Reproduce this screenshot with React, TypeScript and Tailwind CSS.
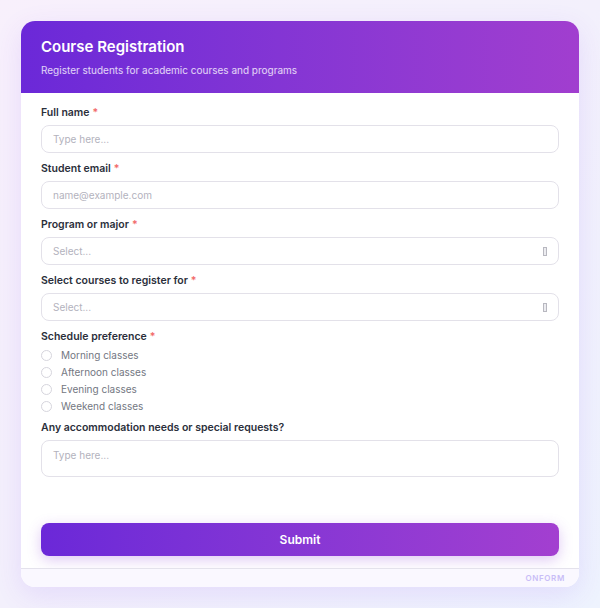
import React from "react";

function Label({ text, required = true }: { text: string; required?: boolean }) {
  return (
    <div className="h-4 text-[10.5px] leading-4 font-semibold text-[#2b2f3b]">
      {text}
      {required && <span className="ml-[3px] text-[#f26b6b]">*</span>}
    </div>
  );
}

function Input({ placeholder }: { placeholder: string }) {
  return (
    <div className="mt-1 flex h-[28px] items-center rounded-lg border-[1.5px] border-[#e3e1e9] bg-white pl-[11px] pr-3 text-[10px] text-[#b3b2bd]">
      {placeholder}
    </div>
  );
}

function Select() {
  return (
    <div className="mt-1 flex h-[28px] items-center justify-between rounded-lg border-[1.5px] border-[#e3e1e9] bg-white pl-[11px] pr-[11px] text-[10px] text-[#b3b2bd]">
      <span>Select...</span>
      <span className="block h-[9px] w-[4px] border border-[#b8b8c0] bg-[#ececf0]" />
    </div>
  );
}

function Radio({ text }: { text: string }) {
  return (
    <div className="flex h-[17px] items-center">
      <span className="block h-[11px] w-[11px] rounded-full border border-[#d6d5dd] bg-white" />
      <span className="ml-[9px] text-[10px] text-[#737782]">{text}</span>
    </div>
  );
}

export default function App() {
  return (
    <div
      className="min-h-[608px] w-full bg-gradient-to-br from-[#f8f0fc] via-[#f3f0fc] to-[#eef3fe] p-[21px]"
      style={{ fontFamily: "Inter, 'Noto Sans', sans-serif" }}
    >
      <div className="flex h-[566px] flex-col overflow-hidden rounded-[14px] bg-white shadow-[0_8px_28px_rgba(124,58,237,0.12)]">
        <div className="h-[72px] bg-gradient-to-r from-[#6b28d8] to-[#a13ecf] px-5 pt-4">
          <div className="text-[15px] leading-5 font-semibold text-white">Course Registration</div>
          <div className="mt-[6px] text-[10px] leading-[14px] text-white/80">
            Register students for academic courses and programs
          </div>
        </div>
        <div className="flex flex-1 flex-col px-5 pt-3">
          <Label text="Full name" />
          <Input placeholder="Type here..." />
          <div className="mt-2">
            <Label text="Student email" />
            <Input placeholder="name@example.com" />
          </div>
          <div className="mt-2">
            <Label text="Program or major" />
            <Select />
          </div>
          <div className="mt-2">
            <Label text="Select courses to register for" />
            <Select />
          </div>
          <div className="mt-2">
            <Label text="Schedule preference" />
            <div className="mt-0.5 flex flex-col">
              <Radio text="Morning classes" />
              <Radio text="Afternoon classes" />
              <Radio text="Evening classes" />
              <Radio text="Weekend classes" />
            </div>
          </div>
          <div className="mt-[5px]">
            <Label text="Any accommodation needs or special requests?" required={false} />
            <div className="mt-1 h-[37px] rounded-lg border-[1.5px] border-[#e3e1e9] bg-white pl-[11px] pr-3 pt-[7px] text-[10px] leading-[14px] text-[#b3b2bd]">
              Type here...
            </div>
          </div>
          <div className="mt-[46px] flex h-[33px] items-center justify-center rounded-lg bg-gradient-to-r from-[#6b28d8] to-[#a33fd0] text-[12px] font-semibold text-white shadow-[0_4px_14px_rgba(139,61,214,0.28)]">
            Submit
          </div>
        </div>
        <div className="flex h-[19px] items-center justify-end border-t border-[#e4e2ec] bg-[#faf8ff] pr-[14px]">
          <span className="text-[8px] font-semibold tracking-[0.08em] text-[#c9bdf7]">ONFORM</span>
        </div>
      </div>
    </div>
  );
}
